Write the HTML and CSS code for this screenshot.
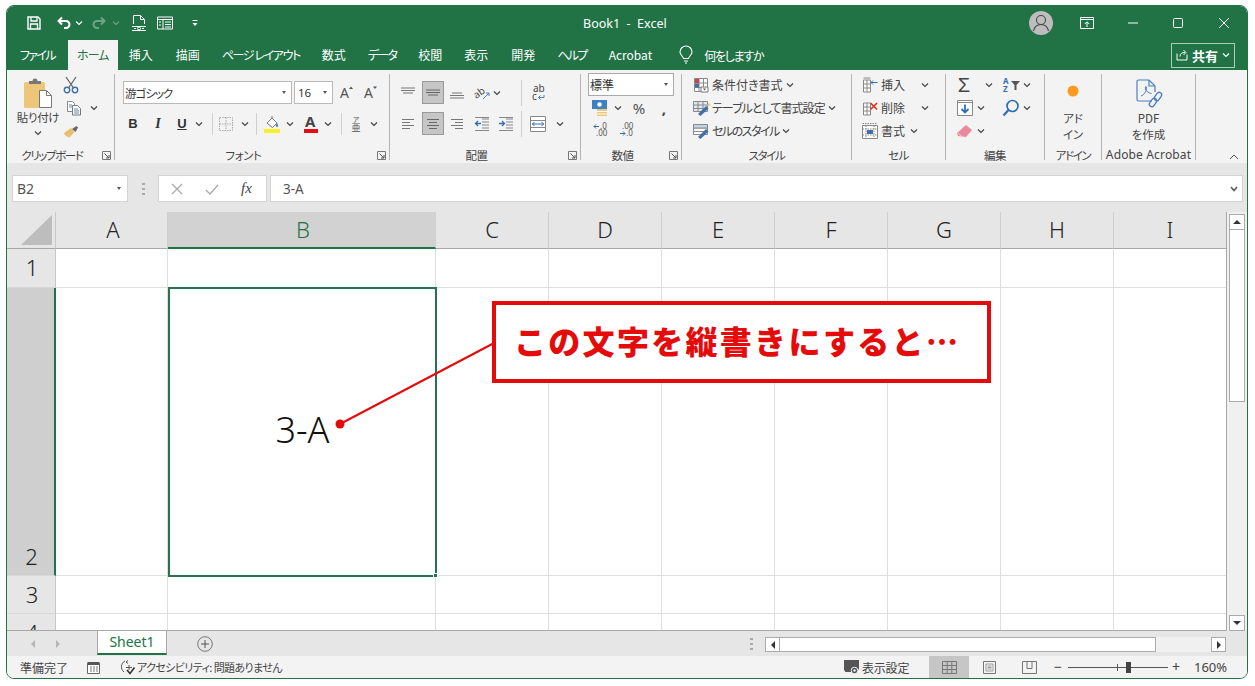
FILE: index.html
```html
<!DOCTYPE html>
<html lang="ja">
<head>
<meta charset="utf-8">
<title>Book1 - Excel</title>
<link rel="stylesheet" href="styles.css">
</head>
<body>
<svg class="defs" aria-hidden="true">
  <symbol id="chev" viewBox="0 0 8 8"><path d="M1 2.5 4 5.5 7 2.5" fill="none" stroke="#444" stroke-width="1.2"/></symbol>
  <symbol id="launch" viewBox="0 0 9 9"><path d="M.5 8.5V.5h8v8z" fill="none" stroke="#777"/><path d="M2.5 2.5 7 7M7 4v3H4" fill="none" stroke="#555"/></symbol>
  <symbol id="al-top" viewBox="0 0 16 16"><path d="M1 3h14M1 5.5h14M3 8h10" stroke="#777" fill="none"/></symbol>
  <symbol id="al-mid" viewBox="0 0 16 16"><path d="M1 5h14M1 7.5h14M3 10h10" stroke="#666" fill="none"/></symbol>
  <symbol id="al-bot" viewBox="0 0 16 16"><path d="M3 8h10M1 10.5h14M1 13h14" stroke="#777" fill="none"/></symbol>
  <symbol id="tx-left" viewBox="0 0 16 16"><path d="M2 3.5h12M2 6.5h8M2 9.5h12M2 12.5h8" stroke="#777" fill="none"/></symbol>
  <symbol id="tx-cen" viewBox="0 0 16 16"><path d="M2 3.5h12M4 6.5h8M2 9.5h12M4 12.5h8" stroke="#666" fill="none"/></symbol>
  <symbol id="tx-right" viewBox="0 0 16 16"><path d="M2 3.5h12M6 6.5h8M2 9.5h12M6 12.5h8" stroke="#777" fill="none"/></symbol>
  <symbol id="tbl" viewBox="0 0 16 16"><path d="M1.5 1.5h13v13h-13zM1.5 6h13M1.5 10.5h13M6 1.5v13M10.5 1.5v13" fill="#fff" stroke="#888"/></symbol>
</svg>

<div class="window">
  <header class="titlebar">
    <div class="qat">
      <svg class="m19" width="16" height="16" viewBox="0 0 16 16"><path d="M2 2h10l2 2v10H2z" fill="none" stroke="#fff" stroke-width="1.4"/><path d="M5 2.5V6h6V2.5M4.500 14V9h7v5" fill="none" stroke="#fff" stroke-width="1.3"/></svg>
      <svg class="m14" width="16" height="16" viewBox="0 0 16 16"><path d="M6 2.500 2.500 6 6 9.500M3 6h7a3.300 3.300 0 0 1 0 7H8" fill="none" stroke="#fff" stroke-width="2"/></svg>
      <svg class="m3" width="8" height="8" viewBox="0 0 8 8"><path d="M1 2.500 4 5.500 7 2.500" fill="none" stroke="#fff" stroke-width="1.100"/></svg>
      <svg class="m8 dim" width="16" height="16" viewBox="0 0 16 16"><path d="M10 2.500 13.500 6 10 9.500M13 6H6a3.300 3.300 0 0 0 0 7h2" fill="none" stroke="#fff" stroke-width="2"/></svg>
      <svg class="m5 dim" width="8" height="8" viewBox="0 0 8 8"><path d="M1 2.500 4 5.500 7 2.500" fill="none" stroke="#fff" stroke-width="1.100"/></svg>
      <svg class="m11" width="16" height="18" viewBox="0 0 16 18"><path d="M2.500 10V1.500h7l4 4V10M9.500 1.500v4h4" fill="none" stroke="#fff"/><path d="M1 12.500h14M1 16.500h14" stroke="#fff" fill="none"/><circle cx="8" cy="14.500" r="1.500" fill="none" stroke="#fff"/><path d="M3 14.500h2M11 14.500h2" stroke="#fff"/></svg>
      <svg class="m10" width="16" height="14" viewBox="0 0 16 14"><path d="M.5 1h15v12H.5zM.5 3.500h15M6 3.500V13M8 6h6M8 8.500h6M8 11h6M2 6h2M2 9h2" fill="none" stroke="#fff"/></svg>
      <svg class="m18" width="8" height="8" viewBox="0 0 8 8"><path d="M1.500 1.500h5" stroke="#fff"/><path d="M1.500 4h5L4 7z" fill="#fff"/></svg>
    </div>
    <div class="doc-title">Book1&nbsp; -&nbsp; Excel</div>
    <div class="win-controls">
      <svg width="24" height="24" viewBox="0 0 24 24"><circle cx="12" cy="12" r="12" fill="#bdbdbd"/><circle cx="12" cy="9" r="4.500" fill="none" stroke="#444" stroke-width="1.100"/><path d="M4.500 20c1-5 4-6.500 7.500-6.500s6.500 1.500 7.500 6.500" fill="none" stroke="#444" stroke-width="1.100"/></svg>
      <svg class="m27" width="14" height="12" viewBox="0 0 14 12"><path d="M.5.500h13v11H.5zM.5 2.500h13M7 10V5M4.800 7 7 4.800 9.200 7" fill="none" stroke="#fff"/></svg>
      <svg class="m33" width="12" height="12" viewBox="0 0 12 12"><path d="M1 6h10" stroke="#fff"/></svg>
      <svg class="m33" width="12" height="12" viewBox="0 0 12 12"><rect x="1.500" y="1.500" width="9" height="9" rx="1" fill="none" stroke="#fff"/></svg>
      <svg class="m34" width="12" height="12" viewBox="0 0 12 12"><path d="M1 1l10 10M11 1 1 11" stroke="#fff"/></svg>
    </div>
  </header>

  <nav class="tabs">
    <span class="tab first kana">ファイル</span>
    <span class="tab active kana">ホーム</span>
    <span class="tab">挿入</span>
    <span class="tab draw">描画</span>
    <span class="tab kana page-tab">ページ レイアウト</span>
    <span class="tab">数式</span>
    <span class="tab kana">データ</span>
    <span class="tab">校閲</span>
    <span class="tab">表示</span>
    <span class="tab dev">開発</span>
    <span class="tab kana">ヘルプ</span>
    <span class="tab">Acrobat</span>
    <svg class="bulb" width="14" height="18" viewBox="0 0 14 18"><path d="M4.500 12.500C4 10 1 9 1 6a6 6 0 0 1 12 0c0 3-3 4-3.500 6.500zM5 15h4M6 17h2" fill="none" stroke="#fff" stroke-width="1.100"/></svg>
    <span class="tell">何をしますか</span>
    <button class="share">
      <svg width="12" height="12" viewBox="0 0 12 12"><path d="M1 4.500V11h10V5.500M4 7.500c0-3 2-4 5-4M7.500 1 10 3.500 7.500 6" fill="none" stroke="#fff"/></svg>
      <b>共有</b>
      <svg width="8" height="8" viewBox="0 0 8 8"><path d="M1 2.500 4 5.500 7 2.500" fill="none" stroke="#fff" stroke-width="1.100"/></svg>
    </button>
  </nav>

  <section class="ribbon">
    <div class="group g-clip">
      <div class="body clip-body">
        <div class="paste">
          <svg width="28" height="30" viewBox="0 0 28 30"><rect x="0" y="4" width="21" height="26" rx="1.500" fill="#edc67a"/><path d="M5 6V3h3.500a2.500 2.500 0 0 1 5 0H17v3z" fill="#777"/><path d="M15.500 12.500h7l5 5v12h-12z" fill="#fff" stroke="#777"/><path d="M22.500 12.500v5h5" fill="none" stroke="#777"/></svg>
          <span class="paste-text">貼り付け</span>
          <svg class="chev" width="8" height="8"><use href="#chev"/></svg>
        </div>
        <div class="clip-tools">
          <div class="row">
            <svg width="16" height="18" viewBox="0 0 16 18"><path d="M3 1l7.500 11M13 1 5.500 12" stroke="#666" stroke-width="1.300" fill="none"/><circle cx="4" cy="14" r="2.700" fill="none" stroke="#3f70a8" stroke-width="1.400"/><circle cx="12" cy="14" r="2.700" fill="none" stroke="#3f70a8" stroke-width="1.400"/></svg>
          </div>
          <div class="row">
            <svg class="m3" width="16" height="16" viewBox="0 0 16 16"><path d="M1.500 1.500h5l2 2v8h-7z" fill="#fff" stroke="#888"/><path d="M6.500 5.500h5l3 3V15h-8z" fill="#fff" stroke="#777"/><path d="M8 9h4M8 11h5M8 13h5M3 5h3M3 7h3" stroke="#5b87b8"/></svg>
            <svg class="m8" width="8" height="8"><use href="#chev"/></svg>
          </div>
          <div class="row">
            <svg width="16" height="14" viewBox="0 0 16 14"><path d="M1 9 8 4l3.500 4-5 5.500C4 13 2 11.500 1 9z" fill="#e8c06c"/><path d="M9 5l3.500 3L15 3.500 13.500 2z" fill="#666"/></svg>
          </div>
        </div>
      </div>
      <div class="label-row"><span class="label tight1">クリップボード</span><svg class="launcher" width="9" height="9"><use href="#launch"/></svg></div>
    </div>

    <div class="group g-font">
      <div class="body">
        <div class="f-row1">
          <div class="combo name"><span>游ゴシック</span><i class="caret"></i></div>
          <div class="combo size"><span>16</span><i class="caret"></i></div>
          <svg class="m7" width="14" height="16" viewBox="0 0 14 16"><text x="0" y="13" class="glyph">A</text><path d="M9 4l2-2.500L13 4z" fill="#555"/></svg>
          <svg class="m10" width="14" height="16" viewBox="0 0 14 16"><text x="0" y="13" class="glyph">A</text><path d="M9 1.500l2 2.500 2-2.500z" fill="#555"/></svg>
        </div>
        <div class="f-row2">
          <span class="letter m3">B</span>
          <span class="letter ital m11">I</span>
          <span class="letter und m10">U</span>
          <svg class="m6" width="8" height="8"><use href="#chev"/></svg>
          <i class="vsep m9"></i>
          <svg class="m5" width="16" height="16" viewBox="0 0 16 16"><path d="M1.500 1.500h13v13h-13zM8 1.500v13M1.500 8h13" fill="none" stroke="#aaa" stroke-dasharray="1.500 1"/></svg>
          <svg class="m7" width="8" height="8"><use href="#chev"/></svg>
          <i class="vsep m7"></i>
          <svg class="m7" width="16" height="18" viewBox="0 0 16 18"><path d="M3 8 8 3l5 5-4.500 4.500z" fill="#fff" stroke="#777"/><path d="M13 8c1.500 2 1.500 4 0 4s-1.500-2 0-4z" fill="#4a7fc4"/><path d="M8 1v3" stroke="#777"/><rect x="0" y="14" width="16" height="4" fill="#ffee22"/></svg>
          <svg class="m6" width="8" height="8"><use href="#chev"/></svg>
          <svg class="m10" width="14" height="18" viewBox="0 0 14 18"><text x="1" y="12" class="glyph bold-a">A</text><rect x="0" y="14" width="14" height="4" fill="#e60b14"/></svg>
          <svg class="m6" width="8" height="8"><use href="#chev"/></svg>
          <i class="vsep m9"></i>
          <span class="ruby m7"><small>ア</small><span>亜</span></span>
          <svg class="m7" width="8" height="8"><use href="#chev"/></svg>
        </div>
      </div>
      <div class="label-row"><span class="label">フォント</span><svg class="launcher" width="9" height="9"><use href="#launch"/></svg></div>
    </div>

    <div class="group g-align">
      <div class="body">
        <div class="a-row">
          <svg class="m10" width="16" height="16"><use href="#al-top"/></svg>
          <span class="pressed m6"><svg width="16" height="16"><use href="#al-mid"/></svg></span>
          <svg class="m5" width="16" height="16"><use href="#al-bot"/></svg>
          <svg class="m9" width="16" height="16" viewBox="0 0 16 16"><text x="0" y="11" class="tiny" transform="rotate(-35 6 9)">ab</text><path d="M9 14 15 8M15 8h-3M15 8v3" stroke="#4a7fc4" fill="none"/></svg>
          <svg class="m3" width="8" height="8"><use href="#chev"/></svg>
          <i class="vsep tall m20"></i>
          <svg class="m8" width="16" height="18" viewBox="0 0 16 18"><text x="3" y="7.500" class="tiny">ab</text><text x="2" y="15.500" class="tiny">c</text><path d="M14 11v2.500H8.500M10.500 11.500l-2 2 2 2" fill="none" stroke="#4a7fc4"/></svg>
        </div>
        <div class="a-row next">
          <svg class="m10" width="16" height="16"><use href="#tx-left"/></svg>
          <span class="pressed m6"><svg width="16" height="16"><use href="#tx-cen"/></svg></span>
          <svg class="m5" width="16" height="16"><use href="#tx-right"/></svg>
          <svg class="m9" width="16" height="16" viewBox="0 0 16 16"><path d="M8 3h7M8 6h7M8 9h7M8 12h7M1 14.500h14M1 1.500h14" stroke="#888" fill="none"/><path d="M7 7.500H1.500M4 5 1.500 7.500 4 10" stroke="#2f6fb8" fill="none" stroke-width="1.300"/></svg>
          <svg class="m8" width="16" height="16" viewBox="0 0 16 16"><path d="M8 3h7M8 6h7M8 9h7M8 12h7M1 14.500h14M1 1.500h14" stroke="#888" fill="none"/><path d="M1 7.500h5.500M4 5l2.500 2.500L4 10" stroke="#2f6fb8" fill="none" stroke-width="1.300"/></svg>
          <i class="vsep tall m7"></i>
          <svg class="m8" width="16" height="16" viewBox="0 0 16 16"><path d="M.5.500h15v15H.5zM.5 4.500h15M.5 11.500h15" fill="#fff" stroke="#888"/><path d="M2 8h12M4.500 6 2.500 8l2 2M11.500 6l2 2-2 2" fill="none" stroke="#2f6fb8"/></svg>
          <svg class="m10" width="8" height="8"><use href="#chev"/></svg>
        </div>
      </div>
      <div class="label-row"><span class="label">配置</span><svg class="launcher" width="9" height="9"><use href="#launch"/></svg></div>
    </div>

    <div class="group g-num">
      <div class="body">
        <div class="combo fmt"><span>標準</span><i class="caret"></i></div>
        <div class="n-row">
          <svg class="m11" width="16" height="16" viewBox="0 0 16 16"><rect x="0" y="0" width="15" height="9" fill="#3f7fc4"/><circle cx="7.500" cy="4.500" r="2.200" fill="#fff"/><path d="M5 9h10v7H5z" fill="#edc67a"/><path d="M5 11.500h10M5 14h10" stroke="#fff"/></svg>
          <svg class="m6" width="8" height="8"><use href="#chev"/></svg>
          <span class="pct m9">%</span>
          <span class="comma m9">,</span>
        </div>
        <div class="n-row">
          <svg class="m11" width="16" height="16" viewBox="0 0 16 16"><text x="8" y="7" class="nano">.0</text><text x="4" y="14" class="nano">.00</text><path d="M7 4.500H2M4 2.500l-2 2 2 2" stroke="#2f6fb8" fill="none"/></svg>
          <svg class="m10" width="16" height="16" viewBox="0 0 16 16"><text x="4" y="7" class="nano">.00</text><text x="8" y="14" class="nano">.0</text><path d="M2 11.500h5M5 9.500l2 2-2 2" stroke="#2f6fb8" fill="none"/></svg>
        </div>
      </div>
      <div class="label-row"><span class="label">数値</span><svg class="launcher" width="9" height="9"><use href="#launch"/></svg></div>
    </div>

    <div class="group g-style">
      <div class="body">
        <div class="s-row">
          <svg width="16" height="16" viewBox="0 0 16 16"><use href="#tbl"/><rect x="2" y="2" width="4" height="4" fill="#c44"/><rect x="2" y="6.500" width="4" height="4" fill="#3f70a8"/><path d="M8 10h7v5H8z" fill="#fff" stroke="#777"/><path d="M10 11.500h3l-1.500 2z" fill="#555"/></svg>
          <span class="s-text">条件付き書式</span>
          <svg class="m3" width="8" height="8"><use href="#chev"/></svg>
        </div>
        <div class="s-row">
          <svg width="18" height="16" viewBox="0 0 18 16"><path d="M.5 1.500h14v10H.5zM.5 5h14M.5 8.500h14M5 1.500v10M10 1.500v10" fill="#dfe8f2" stroke="#888"/><path d="M5 14 13 6l2.500 2.500-8 7.500z" fill="#3f70a8"/><path d="M14 5l2-2 1.500 1.500-2 2z" fill="#edc67a"/></svg>
          <span class="s-text table-text">テーブルとして書式設定</span>
          <svg class="m3" width="8" height="8"><use href="#chev"/></svg>
        </div>
        <div class="s-row">
          <svg width="18" height="16" viewBox="0 0 18 16"><path d="M.5 1.500h14v10H.5zM.5 5h14M.5 8.500h14" fill="#fff" stroke="#888"/><path d="M.5 1.500h14V5H.5z" fill="#c5d5e6" stroke="#888"/><path d="M5 14 13 6l2.500 2.500-8 7.500z" fill="#3f70a8"/></svg>
          <span class="s-text cellstyle-text">セルのスタイル</span>
          <svg class="m3" width="8" height="8"><use href="#chev"/></svg>
        </div>
      </div>
      <div class="label-row centered"><span class="label tight1">スタイル</span></div>
    </div>

    <div class="group g-cell">
      <div class="body">
        <div class="c-row">
          <svg width="16" height="16" viewBox="0 0 16 16"><path d="M1.500 3h7v12h-7zM1.500 7h7M1.500 11h7M5 3v12" fill="#fff" stroke="#888"/><path d="M9 5.500h6.500M11 3.500 9 5.500l2 2" stroke="#2f6fb8" fill="none"/><path d="M1.500 1h7" stroke="#888"/></svg>
          <span class="c-text">挿入</span>
          <svg class="m16" width="8" height="8"><use href="#chev"/></svg>
        </div>
        <div class="c-row">
          <svg width="16" height="16" viewBox="0 0 16 16"><path d="M1.500 3h7v12h-7zM1.500 7h7M1.500 11h7M5 3v12" fill="#fff" stroke="#888"/><path d="M8.500 3 15 9.500M15 3 8.500 9.500" stroke="#e0301e" stroke-width="1.600" fill="none"/></svg>
          <span class="c-text">削除</span>
          <svg class="m16" width="8" height="8"><use href="#chev"/></svg>
        </div>
        <div class="c-row">
          <svg width="16" height="16" viewBox="0 0 16 16"><path d="M.5 2.500h15v13H.5z" fill="#fff" stroke="#888"/><path d="M.5.500h15M.5 6h15M.5 12h15M4 2.500v13M12 2.500v13" stroke="#888" stroke-dasharray="1.500 1" fill="none"/><rect x="5" y="7" width="6" height="4" fill="#3f70a8"/></svg>
          <span class="c-text">書式</span>
          <svg class="m5" width="8" height="8"><use href="#chev"/></svg>
        </div>
      </div>
      <div class="label-row centered"><span class="label">セル</span></div>
    </div>

    <div class="group g-edit">
      <div class="body">
        <div class="e-row first">
          <span class="sigma">Σ</span>
          <svg class="m12" width="8" height="8"><use href="#chev"/></svg>
          <svg class="m10" width="18" height="16" viewBox="0 0 18 16"><text x="0" y="7" class="nano blue">A</text><text x="0" y="15" class="nano blue">Z</text><path d="M8 4h9l-3.500 4v5h-2V8z" fill="#555"/></svg>
          <svg class="m2" width="8" height="8"><use href="#chev"/></svg>
        </div>
        <div class="e-row second">
          <svg width="16" height="16" viewBox="0 0 16 16"><path d="M.5.500h15v15H.5z" fill="#fff" stroke="#888"/><path d="M.5 2.500h15" stroke="#888"/><path d="M8 4.500v8M4.500 9 8 12.500 11.500 9" fill="none" stroke="#2f6fb8" stroke-width="1.800"/></svg>
          <svg class="m4" width="8" height="8"><use href="#chev"/></svg>
          <svg class="m17" width="18" height="18" viewBox="0 0 18 18"><circle cx="10.500" cy="7" r="5.500" fill="none" stroke="#2f6fb8" stroke-width="1.700"/><path d="M6.500 11 1.500 16.500" stroke="#2f6fb8" stroke-width="2.200"/></svg>
          <svg class="m3" width="8" height="8"><use href="#chev"/></svg>
        </div>
        <div class="e-row second">
          <svg width="16" height="14" viewBox="0 0 16 14"><path d="M9 1l6 5-6 7-8-1-1-3z" fill="#e88a9c"/><path d="M1 9l4 3.500" stroke="#f6cdd5"/></svg>
          <svg class="m4" width="8" height="8"><use href="#chev"/></svg>
        </div>
      </div>
      <div class="label-row centered"><span class="label">編集</span></div>
    </div>

    <div class="group g-addin">
      <div class="body big">
        <svg class="dot" width="16" height="16" viewBox="0 0 16 16"><circle cx="8" cy="8" r="5.500" fill="#ff9a1f"/></svg>
        <span class="big-text">アド<br>イン</span>
      </div>
      <div class="label-row centered"><span class="label tight1">アドイン</span></div>
    </div>

    <div class="group g-acro">
      <div class="body big">
        <svg class="pdf" width="30" height="30" viewBox="0 0 30 30"><path d="M18 22H4.500a1.500 1.500 0 0 1-1.500-1.500v-18A1.500 1.500 0 0 1 4.500 1H15l6 6v6" fill="none" stroke="#4a7fc4" stroke-width="1.200"/><path d="M15 1v6h6" fill="none" stroke="#4a7fc4" stroke-width="1.200"/><path d="M7 17c3-1 6-5 5.500-9-.5-1-1.500 0-1 2 .5 2 3 4 6 4.500" fill="none" stroke="#4a7fc4"/><rect x="21.500" y="13" width="5" height="9" rx="2.500" transform="rotate(35 24 17.500)" fill="none" stroke="#4a7fc4" stroke-width="1.300"/><rect x="16.500" y="19" width="5" height="9" rx="2.500" transform="rotate(35 19 23.500)" fill="none" stroke="#4a7fc4" stroke-width="1.300"/></svg>
        <span class="big-text">PDF<br>を作成</span>
      </div>
      <div class="label-row centered"><span class="label acro">Adobe Acrobat</span></div>
    </div>

    <svg class="collapse" width="12" height="8" viewBox="0 0 12 8"><path d="M2 6 6 2l4 4" fill="none" stroke="#555"/></svg>
  </section>

  <section class="formula">
    <div class="namebox"><span>B2</span><i class="caret"></i></div>
    <svg class="grip" width="3" height="12" viewBox="0 0 3 12"><path d="M0 0h3v2H0zM0 5h3v2H0zM0 10h3v2H0z" fill="#aaa"/></svg>
    <div class="fx-btns">
      <svg width="14" height="14" viewBox="0 0 14 14"><path d="M2 2l10 10M12 2 2 12" stroke="#aaa" stroke-width="1.300"/></svg>
      <svg class="m21" width="14" height="14" viewBox="0 0 14 14"><path d="M1 8l4 4 8-9" fill="none" stroke="#aaa" stroke-width="1.300"/></svg>
      <span class="fx">fx</span>
    </div>
    <div class="fx-input"><span>3-A</span>
      <svg width="8" height="8" viewBox="0 0 8 8"><path d="M1 2 4 5.500 7 2" fill="none" stroke="#555" stroke-width="1.500"/></svg>
    </div>
  </section>

  <section class="sheet">
    <div class="grid">
      <div class="hd corner"><svg width="31" height="31" viewBox="0 0 31 31"><path d="M31 0v30H0z" fill="#bdbdbd"/></svg></div>
      <div class="hd col nudge">A</div><div class="hd col sel nudge">B</div><div class="hd col">C</div><div class="hd col">D</div><div class="hd col">E</div><div class="hd col">F</div><div class="hd col">G</div><div class="hd col">H</div><div class="hd col">I</div>

      <div class="hd row-h">1</div>
      <div class="cell"></div><div class="cell"></div><div class="cell"></div><div class="cell"></div><div class="cell"></div><div class="cell"></div><div class="cell"></div><div class="cell"></div><div class="cell"></div>

      <div class="hd row-h row-sel">2</div>
      <div class="cell"></div><div class="cell active-cell">3-A<i class="handle"></i></div><div class="cell"></div><div class="cell"></div><div class="cell"></div><div class="cell"></div><div class="cell"></div><div class="cell"></div><div class="cell"></div>

      <div class="hd row-h">3</div>
      <div class="cell"></div><div class="cell"></div><div class="cell"></div><div class="cell"></div><div class="cell"></div><div class="cell"></div><div class="cell"></div><div class="cell"></div><div class="cell"></div>

      <div class="hd row-h">4</div>
      <div class="cell"></div><div class="cell"></div><div class="cell"></div><div class="cell"></div><div class="cell"></div><div class="cell"></div><div class="cell"></div><div class="cell"></div><div class="cell"></div>
    </div>
    <div class="vscroll">
      <div class="sb-btn"><i class="tri-up"></i></div>
      <div class="sb-thumb"></div>
      <div class="sb-rest"></div>
      <div class="sb-btn"><i class="tri-down"></i></div>
    </div>
    <svg class="leader" width="170" height="100" viewBox="0 0 170 100"><line x1="8" y1="90" x2="164" y2="8" stroke="#e60b0b" stroke-width="2"/><circle cx="8" cy="90" r="4.500" fill="#e60b0b"/></svg>
    <div class="callout">この文字を縦書きにすると…</div>
  </section>

  <section class="sheetbar">
    <i class="nav-l"></i>
    <i class="nav-r"></i>
    <div class="sheet-tab">Sheet1</div>
    <svg class="addsheet" width="16" height="16" viewBox="0 0 16 16"><circle cx="8" cy="8" r="7.300" fill="none" stroke="#777"/><path d="M8 4v8M4 8h8" stroke="#555"/></svg>
    <svg class="grip2" width="3" height="12" viewBox="0 0 3 12"><path d="M0 0h3v2H0zM0 5h3v2H0zM0 10h3v2H0z" fill="#aaa"/></svg>
    <div class="hscroll">
      <div class="hb"><i class="tri-left"></i></div>
      <div class="hthumb"></div>
      <div class="hrest"></div>
      <div class="hb"><i class="tri-right"></i></div>
    </div>
  </section>

  <footer class="status">
    <span class="ready">準備完了</span>
    <svg class="st-cal" width="13" height="13" viewBox="0 0 13 13"><path d="M.5 2.500h12v10H.5z" fill="#fff" stroke="#666"/><path d="M.5 1h12v3H.5z" fill="#555"/><path d="M3 6h2M6 6h2M9 6h2M3 8h2M6 8h2M9 8h2M3 10h2M6 10h2M9 10h2" stroke="#777"/></svg>
    <svg class="st-acc" width="16" height="16" viewBox="0 0 16 16"><path d="M5 2A6.500 6.500 0 0 0 4 13M8 1.500 6 3l2 1.500" fill="none" stroke="#555"/><path d="M6 8.500h6M9 6v5" stroke="#555"/><path d="M7 11l3 3.500 4.500-6" fill="none" stroke="#333" stroke-width="1.600"/></svg>
    <span class="acc-text">アクセシビリティ: 問題ありません</span>
    <svg class="st-disp" width="16" height="16" viewBox="0 0 16 16"><path d="M0 1h15v9.500H8V13H1.500L0 11z" fill="#555"/><circle cx="10.500" cy="11.500" r="3.300" fill="#555" stroke="#f3f3f3"/><circle cx="10.500" cy="11.500" r="1.200" fill="#f3f3f3"/></svg>
    <span class="disp-text">表示設定</span>
    <div class="view on"><svg width="15" height="13" viewBox="0 0 15 13"><path d="M.5.500h14v12H.5zM.5 4.500h14M.5 8.500h14M5.200.500v12M9.800.500v12" fill="none" stroke="#777"/></svg></div>
    <div class="view"><svg width="13" height="13" viewBox="0 0 13 13"><path d="M.5.500h12v12H.5z" fill="none" stroke="#777"/><path d="M3 3h7v7H3zM4.500 5h4M4.500 6.500h4M4.500 8h4" fill="none" stroke="#888" stroke-width=".8"/></svg></div>
    <div class="view"><svg width="15" height="13" viewBox="0 0 15 13"><path d="M.5.500h14v12H.5z" fill="none" stroke="#777"/><path d="M5 .500v7h5v-7" fill="none" stroke="#777"/></svg></div>
    <span class="zoom-btn minus">−</span>
    <div class="slider"><i class="tick"></i><i class="thumb"></i></div>
    <span class="zoom-btn plus">+</span>
    <span class="pct-zoom">160%</span>
  </footer>
</div>
</body>
</html>
```
FILE: styles.css
```css
* { box-sizing: border-box; }
html, body { margin: 0; padding: 0; }
body {
  width: 1255px; height: 686px; background: #fff; overflow: hidden;
  font-family: "Noto Sans CJK JP", "Noto Sans", sans-serif;
  font-feature-settings: "palt"; font-size: 12px; color: #444;
}
svg { display: block; flex: none; overflow: visible; }
i { display: block; flex: none; }
.defs { display: none; }

/* margin helpers for ribbon tools */
.m2 { margin-left: 2px; } .m3 { margin-left: 3px; } .m4 { margin-left: 4px; }
.m5 { margin-left: 5px; } .m6 { margin-left: 6px; } .m7 { margin-left: 7px; }
.m8 { margin-left: 8px; } .m9 { margin-left: 9px; } .m10 { margin-left: 10px; }
.m11 { margin-left: 11px; } .m12 { margin-left: 12px; } .m14 { margin-left: 14px; }
.m16 { margin-left: 16px; } .m17 { margin-left: 17px; } .m18 { margin-left: 18px; } .m19 { margin-left: 19px; }
.m20 { margin-left: 20px; } .m21 { margin-left: 21px; } .m27 { margin-left: 27px; }
.m33 { margin-left: 33px; } .m34 { margin-left: 34px; }

.window {
  width: 1242px; height: 674px; margin: 5px 0 0 6px;
  border: 1px solid #217346; border-radius: 8px; overflow: hidden;
  display: flex; flex-direction: column; background: #f3f3f3;
}

/* title bar */
.titlebar { height: 34px; background: #217346; color: #fff; display: flex; align-items: center; position: relative; flex: none; }
.qat { display: flex; align-items: center; }
.dim { opacity: .35; }
.doc-title { position: absolute; left: 576px; top: 9px; font: 12.5px/18px "Noto Sans", sans-serif; color: #fff; }
.win-controls { margin-left: auto; display: flex; align-items: center; padding-right: 17px; }

/* tabs */
.tabs { height: 30px; background: #217346; color: #fff; display: flex; align-items: center; flex: none; }
.tab { height: 30px; padding: 0 11px; line-height: 30px; white-space: nowrap; font-size: 12px; }
.tab.kana { letter-spacing: -1.7px; }
.tab.first { margin-left: 2px; }
.tab.active { background: #f3f3f3; color: #217346; width: 50px; margin-left: 2px; padding: 0; text-align: center; letter-spacing: -1px; }
.tab.draw { margin-left: 1px; }
.tab.page-tab { letter-spacing: -1.400px; }
.tab.dev { margin-left: 1px; }
.bulb { margin-left: 16px; }
.tell { margin-left: 11px; letter-spacing: -1.300px; }
.share {
  margin-left: auto; margin-right: 12px; width: 64px; height: 25px; background: transparent;
  border: 1px solid #a8cdb8; color: #fff; display: flex; align-items: center; justify-content: center; gap: 4px;
  padding: 0; font: inherit; font-size: 13px;
}

/* ribbon */
.ribbon { height: 93px; background: #f3f3f3; display: flex; align-items: flex-start; position: relative; flex: none; }
.group { height: 86px; margin-top: 4px; border-right: 1px solid #b4b4b4; display: flex; flex-direction: column; flex: none; }
.body { height: 73px; flex: none; }
.g-style .body, .g-cell .body, .g-edit .body { margin-top: -1px; height: 74px; }
.label-row { height: 16px; margin-bottom: -3px; display: flex; align-items: center; }
.label { flex: 1; text-align: center; font-size: 11.5px; line-height: 16px; color: #444; white-space: nowrap; letter-spacing: -.4px; }
.label.tight1 { letter-spacing: -1.400px; }
.label.acro { font-family: "Noto Sans", sans-serif; font-size: 12px; letter-spacing: .15px; }
.launcher { margin: 0 3px 0 5px; }
.chev { display: block; }

.g-clip { width: 108px; }
.g-font { width: 275px; }
.g-align { width: 191px; }
.g-num { width: 101px; }
.g-style { width: 170px; }
.g-cell { width: 94px; }
.g-edit { width: 99px; }
.g-addin { width: 57px; }
.g-acro { width: 94px; }

.clip-body { display: flex; }
.paste { width: 50px; margin-left: 6px; padding-top: 4px; display: flex; flex-direction: column; align-items: center; }
.paste-text { font-size: 11.5px; line-height: 16px; margin-top: 1px; white-space: nowrap; letter-spacing: -.3px; }
.paste .chev { margin-top: 4px; }
.clip-tools { display: flex; flex-direction: column; margin-top: -1px; }
.row { height: 23px; display: flex; align-items: center; }

.f-row1 { margin-top: 7px; height: 23px; display: flex; align-items: center; padding-left: 8px; }
.f-row2 { margin-top: 8px; height: 24px; display: flex; align-items: center; padding-left: 8px; }
.combo { height: 23px; background: #fff; border: 1px solid #b9b9b9; display: flex; align-items: center; justify-content: space-between; padding: 0 5px 0 1px; font-size: 11.5px; color: #333; }
.combo.name { width: 169px; letter-spacing: -1px; }
.combo.size { width: 39px; margin-left: 2px; padding-left: 3px; font-family: "Noto Sans", sans-serif; }
.caret { width: 0; height: 0; border-left: 2.500px solid transparent; border-right: 2.500px solid transparent; border-top: 3px solid #555; }
.glyph { font: 14px "Noto Sans", sans-serif; fill: #555; }
.bold-a { font-weight: 700; font-size: 15px; fill: #444; }
.letter { width: 14px; text-align: center; font-size: 13px; line-height: 16px; color: #333; font-family: "Liberation Sans", sans-serif; font-weight: 700; }
.ital { font-family: "Liberation Serif", serif; font-style: italic; font-size: 14px; }
.und { text-decoration: underline; }
.vsep { width: 1px; height: 22px; background: #cfcfcf; }
.vsep.tall { height: 26px; }
.ruby { width: 14px; display: flex; flex-direction: column; align-items: center; font-size: 9px; line-height: 9px; color: #555; }
.ruby small { font-size: 7px; line-height: 7px; }

.a-row { margin-top: 7px; height: 23px; display: flex; align-items: center; }
.a-row.next { margin-top: 8px; }
.pressed { width: 22px; height: 23px; background: #c6c6c6; border: 1px solid #999; display: flex; align-items: center; justify-content: center; }
.tiny { font: 10px "Noto Sans", sans-serif; fill: #444; }
.nano { font: 8px "Noto Sans", sans-serif; fill: #555; }
.nano.blue { fill: #2f6fb8; font-weight: 700; }

.combo.fmt { width: 86px; margin: -1px 0 0 7px; border-color: #aaa; font-size: 12px; }
.n-row { height: 20px; margin-top: 2px; display: flex; align-items: center; }
.pct { width: 16px; font: 15px/20px "Noto Sans", sans-serif; text-align: center; color: #555; }
.comma { width: 16px; font: 700 15px/14px "Noto Sans", sans-serif; text-align: center; color: #444; }

.s-row { height: 23px; display: flex; align-items: center; padding-left: 11px; white-space: nowrap; }
.s-text { margin-left: 3px; font-size: 12px; }
.table-text { margin-left: 1px; letter-spacing: -.95px; }
.cellstyle-text { margin-left: 1px; letter-spacing: -1.500px; }

.c-row { height: 23px; display: flex; align-items: center; padding-left: 10px; }
.c-text { margin-left: 3px; width: 24px; font-size: 12px; white-space: nowrap; }

.e-row { height: 23px; display: flex; align-items: center; }
.e-row.first { padding-left: 9px; }
.e-row.second { padding-left: 11px; }
.sigma { width: 18px; font: 20px/22px "Liberation Sans", sans-serif; text-align: center; color: #444; }

.big { display: flex; flex-direction: column; align-items: center; }
.dot { margin-top: 9px; margin-bottom: 11px; }
.pdf { margin-top: 5px; margin-bottom: 1px; }
.big-text { line-height: 16px; font-size: 11.5px; text-align: center; }
.collapse { margin: 83px 0 0 32px; }

/* formula bar */
.formula { height: 49px; background: #e6e6e6; padding-top: 12px; display: flex; align-items: flex-start; flex: none; }
.namebox { width: 116px; height: 27px; margin-left: 5px; background: #fff; border: 1px solid #d4d4d4; display: flex; align-items: center; justify-content: space-between; padding: 0 6px 0 4px; font-size: 14px; color: #555; font-family: "Noto Sans", sans-serif; }
.grip { margin: 8px 0 0 14px; }
.fx-btns { width: 109px; height: 27px; margin-left: 13px; background: #fff; border: 1px solid #d4d4d4; display: flex; align-items: center; padding-left: 11px; }
.fx { margin-left: 22px; font: italic 15px "Liberation Serif", serif; color: #444; }
.fx-input { width: 973px; height: 27px; margin-left: 3px; background: #fff; border: 1px solid #d4d4d4; display: flex; align-items: center; justify-content: space-between; padding: 0 4px 0 12px; font: 13.5px "Noto Sans", sans-serif; color: #555; }

/* sheet */
.sheet { height: 419px; display: flex; position: relative; flex: none; background: #f0f0f0; }
.grid { width: 1220px; height: 419px; flex: none; overflow: hidden; display: grid; background: #fff;
  grid-template-columns: 49px 112px 268px repeat(7, 113px);
  grid-template-rows: 37px 39px 288px 38px 38px; border-right: 1px solid #a8a8a8; border-bottom: 1px solid #a8a8a8; }
.hd { background: #e6e6e6; display: flex; align-items: center; justify-content: center; font: 300 22px "Noto Sans", sans-serif; color: #222; }
.corner { align-items: flex-start; justify-content: flex-end; padding: 3px 3px 0 0; border-bottom: 1px solid #a8a8a8; border-right: 1px solid #c8c8c8; }
.col { border-right: 1px solid #cfcfcf; border-bottom: 1px solid #a8a8a8; padding-bottom: 2px; }
.col.nudge { padding-left: 3px; }
.col.sel { background: #d2d2d2; color: #217346; border-bottom: 2px solid #217346; }
.row-h { border-right: 1px solid #c6c6c6; border-bottom: 1px solid #d8d8d8; padding: 0 0 2px 2px; }
.row-sel { background: #cfcfcf; border-right: 2px solid #217346; align-items: flex-end; padding-bottom: 4px; }
.cell { border-right: 1px solid #dfdfdf; border-bottom: 1px solid #dfdfdf; }
.active-cell {
  position: relative; margin: -1px -1px -1px 0; border: 2px solid #27734d; background: #fff; z-index: 1;
  display: flex; align-items: center; justify-content: center; font: 300 36px "Noto Sans", sans-serif; color: #111; padding-bottom: 6px;
}
.handle { position: absolute; right: -3px; bottom: -3px; width: 5px; height: 5px; background: #217346; border: 1px solid #fff; }

.vscroll { width: 20px; padding: 2px 2px 0 2px; display: flex; flex-direction: column; }
.sb-btn { height: 16px; background: #fff; border: 1px solid #ababab; display: flex; align-items: center; justify-content: center; flex: none; }
.sb-thumb { height: 172px; background: #fff; border: 1px solid #ababab; border-top: 0; flex: none; }
.sb-rest { flex: 1; }
.tri-up { border-left: 4px solid transparent; border-right: 4px solid transparent; border-bottom: 4px solid #333; }
.tri-down { border-left: 4px solid transparent; border-right: 4px solid transparent; border-top: 4px solid #333; }
.tri-left { border-top: 4px solid transparent; border-bottom: 4px solid transparent; border-right: 4px solid #333; }
.tri-right { border-top: 4px solid transparent; border-bottom: 4px solid transparent; border-left: 4px solid #333; }

.leader { position: absolute; left: 325px; top: 122px; z-index: 2; }
.callout {
  position: absolute; left: 485px; top: 89px; width: 499px; height: 82px; z-index: 2;
  border: 4px solid #e60b0b; background: #fff; display: flex; align-items: center; padding: 0 0 5px 18px;
  font-size: 32px; font-weight: 900; letter-spacing: 2.300px; color: #e60b0b; white-space: nowrap; font-feature-settings: normal;
}

/* sheet tabs */
.sheetbar { height: 25px; background: #e6e6e6; display: flex; align-items: flex-start; flex: none; }
.nav-l { margin: 9px 0 0 24px; border-top: 4px solid transparent; border-bottom: 4px solid transparent; border-right: 4px solid #b5b5b5; }
.nav-r { margin: 9px 0 0 21px; border-top: 4px solid transparent; border-bottom: 4px solid transparent; border-left: 4px solid #b5b5b5; }
.sheet-tab { width: 70px; height: 24px; margin-left: 37px; background: #fff; border: 1px solid #a8a8a8; border-top: 0; border-bottom: 2px solid #217346; color: #217346; font: 14px/22px "Noto Sans", sans-serif; text-align: center; }
.addsheet { margin: 5px 0 0 30px; }
.grip2 { margin: 7px 0 0 537px; }
.hscroll { width: 461px; height: 15px; margin: 6px 0 0 12px; display: flex; }
.hb { width: 15px; height: 15px; background: #fff; border: 1px solid #ababab; display: flex; align-items: center; justify-content: center; flex: none; }
.hthumb { width: 376px; background: #fff; border: 1px solid #ababab; border-left: 0; flex: none; }
.hrest { flex: 1; background: #f0f0f0; }

/* status bar */
.status { height: 22px; background: #f3f3f3; display: flex; align-items: center; flex: none; }
.ready { margin-left: 13px; width: 48px; font-size: 12px; white-space: nowrap; }
.st-cal { margin-left: 19px; }
.st-acc { margin-left: 20px; }
.acc-text { margin-left: 1px; font-size: 11px; white-space: nowrap; width: 147px; letter-spacing: -.6px; }
.st-disp { margin-left: 560px; }
.disp-text { margin-left: 2px; width: 67px; font-size: 12px; white-space: nowrap; letter-spacing: -.2px; }
.view { width: 40px; height: 22px; display: flex; align-items: center; justify-content: center; }
.view.on { background: #c6c6c6; }
.zoom-btn { width: 10px; text-align: center; font: 14px/20px "Noto Sans", sans-serif; color: #444; }
.minus { margin-left: 4px; }
.slider { width: 100px; height: 1px; margin-left: 5px; background: #555; position: relative; }
.tick { position: absolute; left: 49px; top: -3px; width: 1px; height: 7px; background: #555; }
.thumb { position: absolute; left: 58px; top: -5px; width: 5px; height: 11px; background: #444; }
.plus { margin-left: 3px; }
.pct-zoom { margin-left: 13px; font: 13px "Noto Sans", sans-serif; color: #444; }
```
